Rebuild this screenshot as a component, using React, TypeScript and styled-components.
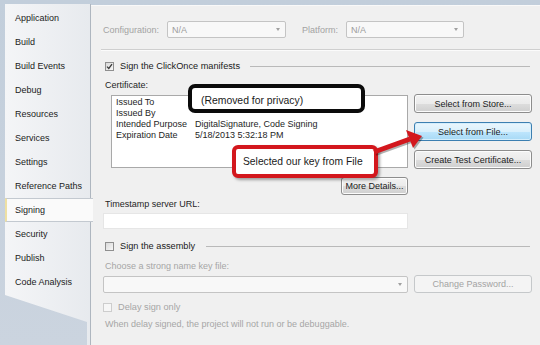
import React from 'react';
import styled, { createGlobalStyle } from 'styled-components';

const Global = createGlobalStyle`
  html, body { margin: 0; padding: 0; }
  body {
    width: 540px; height: 345px; overflow: hidden;
    font-family: "Liberation Sans", Arial, sans-serif;
    font-size: 9px; color: #1e1e1e;
  }
`;

const Page = styled.div`
  position: relative;
  width: 540px; height: 345px;
  box-sizing: border-box;
  padding: 4px 0 0 5px;
  background: linear-gradient(180deg, #c2cedb 0%, #cbd4df 100%);
  display: flex;
  overflow: hidden;
`;

const Sidebar = styled.nav`
  width: 86px; flex: none;
  box-sizing: border-box;
  padding-top: 2px;
  background: linear-gradient(90deg, #f4f5f7 0%, #e7eaee 100%);
  border-right: 1px solid #aeb6bf;
  display: flex; flex-direction: column;
  clip-path: polygon(0 0, 130% 0, 130% 100%, 82px 100%, 82px 318px, 0 291px);
`;

const NavItem = styled.div<{ $active?: boolean }>`
  height: 24px;
  box-sizing: border-box;
  display: flex; align-items: center;
  padding-left: 10px;
  font-size: 9px;
  color: #1b1b1b;
  ${p => p.$active ? `
    background: #fafafa;
    border-top: 1px solid #c3c9d0;
    border-bottom: 1px solid #c3c9d0;
    border-left: 2px solid #eee0a4;
    padding-left: 8px;
    margin-right: -3px;
  ` : ''}
`;

const Main = styled.main`
  flex: 1;
  margin-top: 1px;
  box-sizing: border-box;
  background: #f0f0f0;
  border-top: 1px solid #f9f9f9;
  padding: 15px 7px 0 12px;
  display: flex; flex-direction: column;
`;

const TopRow = styled.div`
  display: flex; align-items: center; height: 17px;
`;

const DimLabel = styled.span<{ $w?: number; $ml?: number }>`
  color: #a3a3a3;
  width: ${p => p.$w ?? 0}px;
  margin-left: ${p => p.$ml ?? 0}px;
  flex: none;
  white-space: nowrap;
`;

const Combo = styled.div<{ $w: number; $h?: number }>`
  width: ${p => p.$w}px; height: ${p => p.$h ?? 17}px;
  box-sizing: border-box;
  border: 1px solid #c4c4c4;
  border-radius: 2px;
  background: #f8f8f8;
  display: flex; align-items: center;
  padding: 0 4px;
  color: #9c9c9c;
  flex: none;
`;

const ComboText = styled.span`
  flex: 1;
`;

const Arrow = styled.span`
  width: 0; height: 0;
  border-left: 2.5px solid transparent;
  border-right: 2.5px solid transparent;
  border-top: 3px solid #a0a0a0;
  margin-right: 1px;
`;

const Separator = styled.div`
  height: 1px;
  background: #cfcfcf;
  margin: 11px -7px 0 -2px;
  box-shadow: 0 1px 0 #fbfbfb;
`;

const GroupRow = styled.div<{ $mt: number }>`
  display: flex; align-items: center;
  height: 12px;
  margin-top: ${p => p.$mt}px;
  padding-left: 2px;
`;

const CheckBox = styled.span<{ $disabled?: boolean }>`
  width: 9px; height: 9px;
  box-sizing: border-box;
  flex: none;
  border: 1px solid ${p => p.$disabled ? '#cdcdcd' : '#8f8f8f'};
  background: ${p => p.$disabled ? '#f6f6f6' : 'linear-gradient(135deg, #d9d9d9 0%, #f7f7f7 100%)'};
  display: flex; align-items: center; justify-content: center;
`;

const GroupTitle = styled.span<{ $disabled?: boolean }>`
  margin-left: 6px;
  font-size: 9.2px;
  color: ${p => p.$disabled ? '#a6a6a6' : '#1a1a1a'};
  white-space: nowrap;
`;

const Rule = styled.span<{ $ml: number }>`
  flex: 1;
  height: 1px;
  background: #b9b9b9;
  margin-left: ${p => p.$ml}px;
  margin-right: 3px;
`;

const FieldLabel = styled.div<{ $mt: number; $dim?: boolean }>`
  height: 12px; line-height: 12px;
  margin-top: ${p => p.$mt}px;
  padding-left: 2px;
  color: ${p => p.$dim ? '#a6a6a6' : '#1e1e1e'};
  white-space: nowrap;
`;

const CertRow = styled.div`
  display: flex;
  margin-top: 3px;
`;

const CertBox = styled.div`
  width: 297px; height: 73px;
  margin-left: 8px; margin-top: 1px;
  box-sizing: border-box;
  background: #ffffff;
  border: 1px solid #a9a9a9;
  padding: 1px 0 0 4px;
  flex: none;
`;

const CertLine = styled.div`
  display: flex;
  height: 11px; line-height: 11px;
`;

const CertKey = styled.span`
  width: 79px; flex: none;
`;

const ButtonCol = styled.div`
  margin-left: 6px;
  width: 118px;
  display: flex; flex-direction: column; gap: 9px;
`;

type Variant = 'normal' | 'focused' | 'disabled';

const Button = styled.div<{ $variant?: Variant; $w?: number; $h?: number }>`
  width: ${p => p.$w ? `${p.$w}px` : '100%'};
  height: ${p => p.$h ?? 19}px;
  box-sizing: border-box;
  border-radius: 3px;
  display: flex; align-items: center; justify-content: center;
  font-size: 9px;
  white-space: nowrap;
  flex: none;
  ${p => p.$variant === 'focused' ? `
    border: 1px solid #3c7fb1;
    background: linear-gradient(180deg, #eaf6fd 0%, #d9f0fc 50%, #bee6fd 51%, #a7d9f5 100%);
    box-shadow: inset 0 0 0 1px #d4eefc;
    color: #1b1b1b;
  ` : p.$variant === 'disabled' ? `
    border: 1px solid #c5c8ca;
    background: #f4f4f4;
    color: #a3a3a3;
  ` : `
    border: 1px solid #8d8d8d;
    background: linear-gradient(180deg, #f2f2f2 0%, #ebebeb 50%, #dddddd 51%, #cfcfcf 100%);
    box-shadow: inset 0 0 0 1px #fcfcfc;
    color: #1b1b1b;
  `}
`;

const DetailsRow = styled.div`
  width: 305px;
  display: flex; justify-content: flex-end;
  margin-top: 8px;
`;

const TextInput = styled.div`
  width: 305px; height: 16px;
  box-sizing: border-box;
  margin-top: 3px;
  background: #ffffff;
  border: 1px solid #e6e6e6;
`;

const KeyRow = styled.div`
  display: flex; align-items: flex-end;
  margin-top: 3px;
  gap: 6px;
`;

const DelayRow = styled.div`
  display: flex; align-items: center;
  height: 12px;
  margin-top: 8px;
`;

const Note = styled.div`
  margin-top: 5px;
  padding-left: 2px;
  height: 12px; line-height: 12px;
  color: #a6a6a6;
  white-space: nowrap;
`;

const PrivacyCallout = styled.div`
  position: absolute;
  left: 188px; top: 84px;
  width: 177px; height: 29px;
  box-sizing: border-box;
  border: 4px solid #0b0b0b;
  border-radius: 7px;
  background: #ffffff;
  padding: 3px 0 0 9px;
  display: flex; align-items: center;
  font-size: 10.4px;
  color: #1a1a1a;
  white-space: nowrap;
`;

const RedCallout = styled.div`
  position: absolute;
  left: 232px; top: 145px;
  width: 146px; height: 33px;
  box-sizing: border-box;
  border: 4px solid #d3171d;
  border-radius: 6px;
  background: #ffffff;
  box-shadow: 2px 2px 3px rgba(0, 0, 0, 0.35);
  padding-left: 7px;
  display: flex; align-items: center;
  font-size: 10.3px;
  color: #1a1a1a;
  white-space: nowrap;
`;

const ArrowSvg = styled.svg`
  position: absolute;
  left: 368px; top: 124px;
  width: 58px; height: 36px;
  overflow: visible;
`;

const navItems = [
  'Application', 'Build', 'Build Events', 'Debug', 'Resources', 'Services',
  'Settings', 'Reference Paths', 'Signing', 'Security', 'Publish', 'Code Analysis',
];

const Check = () => (
  <svg width="7" height="7" viewBox="0 0 7 7">
    <path d="M1 3.6 L2.8 5.4 L6 1.2" fill="none" stroke="#3a3a3a" strokeWidth="1.3" />
  </svg>
);

export default function App() {
  return (
    <>
      <Global />
      <Page>
        <Sidebar>
          {navItems.map(n => (
            <NavItem key={n} $active={n === 'Signing'}>{n}</NavItem>
          ))}
        </Sidebar>
        <Main>
          <TopRow>
            <DimLabel $w={64}>Configuration:</DimLabel>
            <Combo $w={119}><ComboText>N/A</ComboText><Arrow /></Combo>
            <DimLabel $w={44} $ml={16}>Platform:</DimLabel>
            <Combo $w={118}><ComboText>N/A</ComboText><Arrow /></Combo>
          </TopRow>
          <Separator />
          <GroupRow $mt={10}>
            <CheckBox><Check /></CheckBox>
            <GroupTitle>Sign the ClickOnce manifests</GroupTitle>
            <Rule $ml={10} />
          </GroupRow>
          <FieldLabel $mt={7}>Certificate:</FieldLabel>
          <CertRow>
            <CertBox>
              <CertLine><CertKey>Issued To</CertKey></CertLine>
              <CertLine><CertKey>Issued By</CertKey></CertLine>
              <CertLine><CertKey>Intended Purpose</CertKey><span>DigitalSignature, Code Signing</span></CertLine>
              <CertLine><CertKey>Expiration Date</CertKey><span>5/18/2013 5:32:18 PM</span></CertLine>
            </CertBox>
            <ButtonCol>
              <Button>Select from Store...</Button>
              <Button $variant="focused">Select from File...</Button>
              <Button>Create Test Certificate...</Button>
            </ButtonCol>
          </CertRow>
          <DetailsRow>
            <Button $w={67} $h={18}>More Details...</Button>
          </DetailsRow>
          <FieldLabel $mt={3}>Timestamp server URL:</FieldLabel>
          <TextInput />
          <GroupRow $mt={11}>
            <CheckBox />
            <GroupTitle>Sign the assembly</GroupTitle>
            <Rule $ml={11} />
          </GroupRow>
          <FieldLabel $mt={8} $dim>Choose a strong name key file:</FieldLabel>
          <KeyRow>
            <Combo $w={305}><ComboText /><Arrow /></Combo>
            <Button $variant="disabled" $w={118} $h={18}>Change Password...</Button>
          </KeyRow>
          <DelayRow>
            <CheckBox $disabled />
            <GroupTitle $disabled>Delay sign only</GroupTitle>
          </DelayRow>
          <Note>When delay signed, the project will not run or be debuggable.</Note>
        </Main>
        <PrivacyCallout>(Removed for privacy)</PrivacyCallout>
        <RedCallout>Selected our key from File</RedCallout>
        <ArrowSvg viewBox="0 0 58 36">
          <g transform="translate(1.5,1.5)" opacity="0.3">
            <path d="M6 28 L42 15" stroke="#000" strokeWidth="5" fill="none" />
            <path d="M54 12 L38 6 L45 24 Z" fill="#000" />
          </g>
          <path d="M6 28 L42 15" stroke="#d3171d" strokeWidth="5" fill="none" />
          <path d="M54 12 L38 6 L45 24 Z" fill="#d3171d" />
        </ArrowSvg>
      </Page>
    </>
  );
}
